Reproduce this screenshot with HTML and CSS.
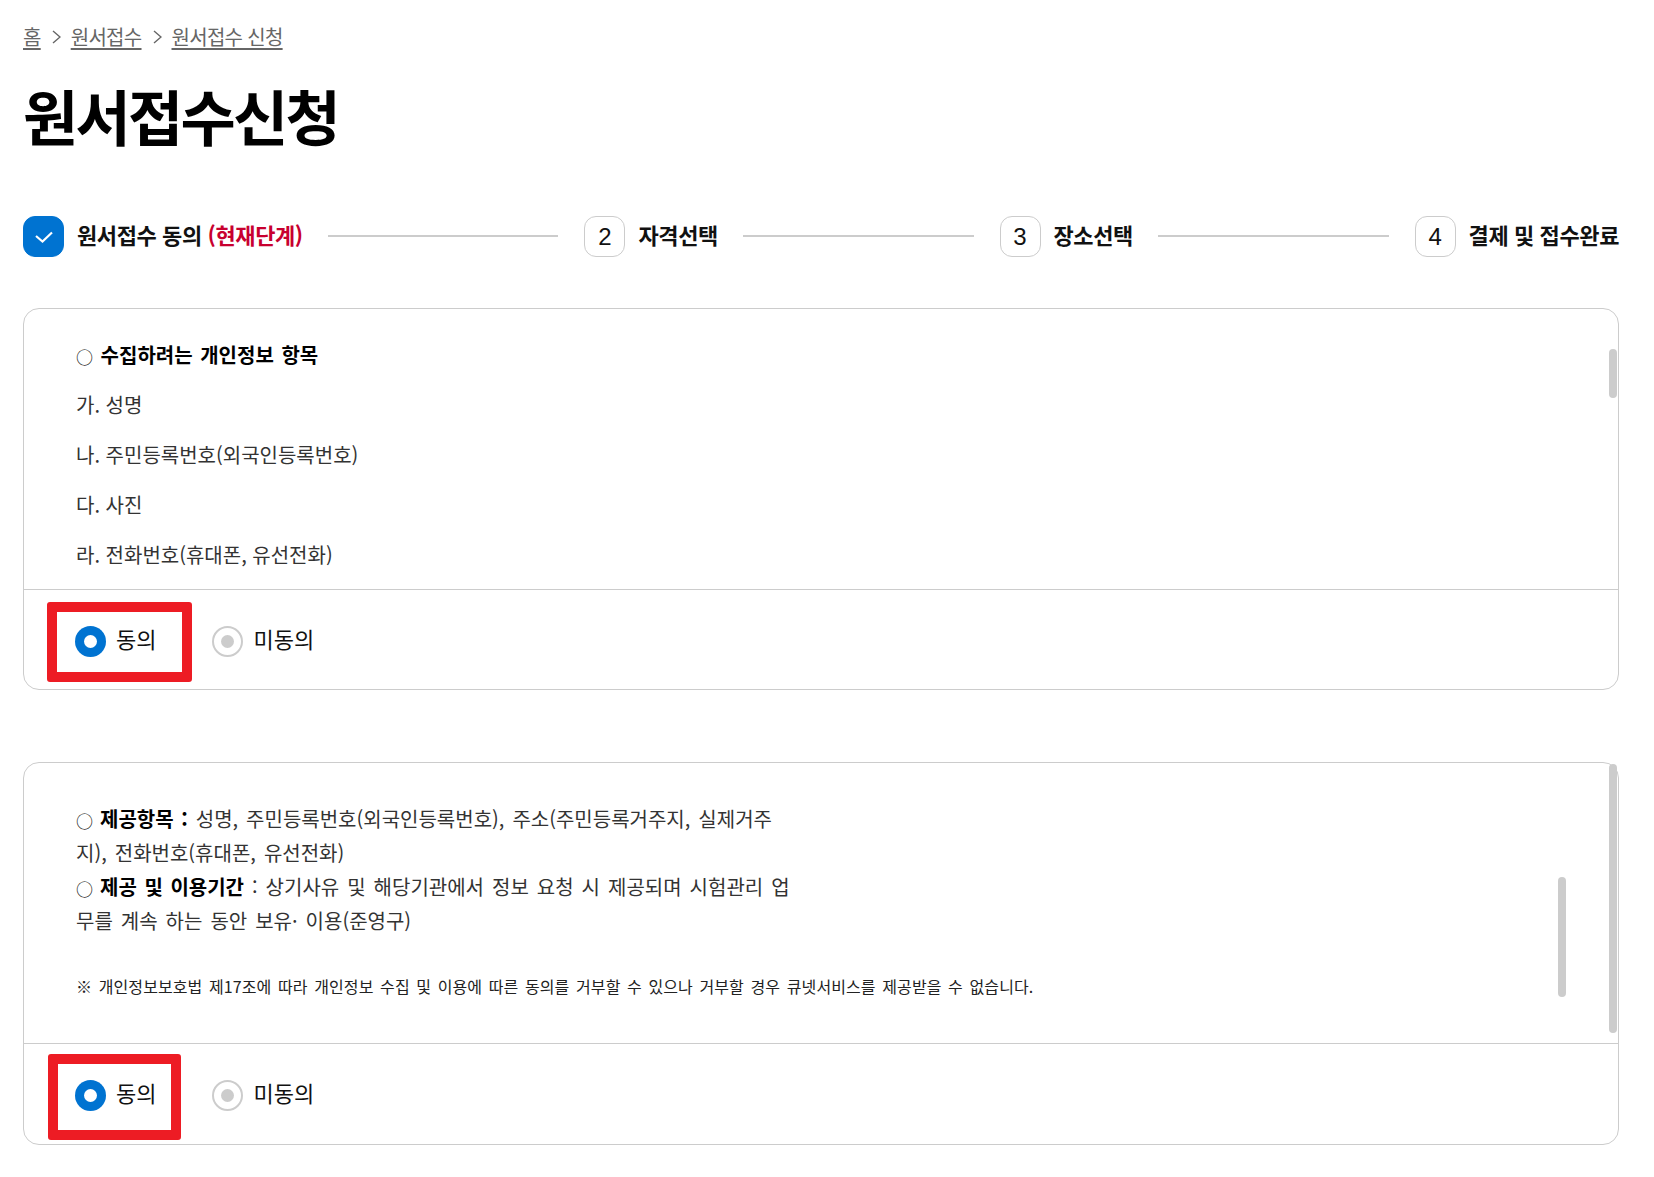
FILE: index.html
```html
<!DOCTYPE html>
<html lang="ko">
<head>
<meta charset="utf-8">
<title>원서접수신청</title>
<link rel="stylesheet" href="styles.css">
</head>
<body>
<nav class="crumbs">
  <a href="#">홈</a>
  <svg class="chev" viewBox="0 0 10 16"><path d="M2 2l7 6-7 6"/></svg>
  <a href="#">원서접수</a>
  <svg class="chev" viewBox="0 0 10 16"><path d="M2 2l7 6-7 6"/></svg>
  <a href="#">원서접수 신청</a>
</nav>
<h1 class="title">원서접수신청</h1>
<ol class="steps">
  <li class="step"><span class="num done"><svg viewBox="0 0 20 20"><path d="M2 9l6.5 5.5L18 5.5"/></svg></span><span class="step-name">원서접수 동의 <em>(현재단계)</em></span></li>
  <li class="line"></li>
  <li class="step"><span class="num">2</span><span class="step-name">자격선택</span></li>
  <li class="line"></li>
  <li class="step"><span class="num">3</span><span class="step-name">장소선택</span></li>
  <li class="line"></li>
  <li class="step"><span class="num">4</span><span class="step-name">결제 및 접수완료</span></li>
</ol>

<section class="card card-one">
  <div class="terms">
    <p><span class="ring">○</span> <strong>수집하려는 개인정보 항목</strong></p>
    <p>가. 성명</p>
    <p>나. 주민등록번호(외국인등록번호)</p>
    <p>다. 사진</p>
    <p>라. 전화번호(휴대폰, 유선전화)</p>
    <span class="thumb thumb-one"></span>
  </div>
  <div class="choices">
    <label class="choice"><span class="radio on"></span>동의</label>
    <label class="choice"><span class="radio"></span>미동의</label>
    <span class="mark mark-one"></span>
  </div>
</section>

<section class="card card-two">
  <div class="terms">
    <p class="dense"><span class="ring">○</span> <strong>제공항목 :</strong> 성명, 주민등록번호(외국인등록번호), 주소(주민등록거주지, 실제거주<br>지), 전화번호(휴대폰, 유선전화)<br><span class="ring">○</span> <strong>제공 및 이용기간</strong> : 상기사유 및 해당기관에서 정보 요청 시 제공되며 시험관리 업<br>무를 계속 하는 동안 보유· 이용(준영구)</p>
    <p class="note">※ 개인정보보호법 제17조에 따라 개인정보 수집 및 이용에 따른 동의를 거부할 수 있으나 거부할 경우 큐넷서비스를 제공받을 수 없습니다.</p>
    <span class="thumb thumb-inner"></span>
    <span class="thumb thumb-outer"></span>
  </div>
  <div class="choices">
    <label class="choice"><span class="radio on"></span>동의</label>
    <label class="choice"><span class="radio"></span>미동의</label>
    <span class="mark mark-two"></span>
  </div>
</section>
</body>
</html>
```
FILE: styles.css
```css
* { box-sizing: border-box; }
html, body { margin: 0; background: #fff; }
body {
  padding: 0 35px 0 23px;
  height: 1177px;
  overflow: hidden;
  font-family: "Noto Sans CJK KR", "Noto Sans", sans-serif;
  color: #222;
}
.crumbs {
  height: 30px;
  margin-top: 21px;
  display: flex;
  align-items: center;
  gap: 10px;
  font-size: 20px;
  letter-spacing: -0.7px;
  color: #666;
}
.crumbs a { color: #666; text-decoration: underline; text-underline-offset: 3px; }
.chev { width: 10px; height: 16px; margin-top: 2px; }
.chev path { fill: none; stroke: #666; stroke-width: 1.4; }
.title {
  margin: 29px 0 0;
  height: 70px;
  font-size: 60px;
  line-height: 70px;
  font-weight: 700;
  letter-spacing: -2.7px;
  color: #000;
}
.steps {
  list-style: none;
  margin: 66px 0 0;
  padding: 0;
  display: flex;
  align-items: center;
  height: 41px;
}
.step { display: flex; align-items: center; gap: 13px; }
.num {
  width: 41px;
  height: 41px;
  border: 1px solid #ccc;
  border-radius: 12px;
  display: flex;
  align-items: center;
  justify-content: center;
  font-size: 24px;
  font-family: "Liberation Sans", sans-serif;
  color: #111;
}
.num.done { background: #0073d1; border-color: #0073d1; }
.num.done svg { width: 20px; height: 20px; }
.num.done path { fill: none; stroke: #fff; stroke-width: 2.2; }
.step-name {
  margin-top: -6px;
  font-size: 22px;
  font-weight: 700;
  letter-spacing: -0.4px;
  color: #111;
  white-space: nowrap;
}
.step-name em { font-style: normal; color: #c8002f; }
.line { flex: 1; height: 2px; background: #ccc; margin: -1px 26px 0 25px; }
.card {
  position: relative;
  border: 1px solid #ccc;
  border-radius: 16px;
}
.card-one { margin-top: 51px; height: 382px; }
.card-two { margin-top: 72px; height: 383px; }
.terms { position: relative; padding: 0 0 0 52px; }
.card-one .terms { height: 280px; padding-top: 21px; }
.card-two .terms { height: 280px; padding-top: 39px; }
.terms p { margin: 0; font-size: 20px; line-height: 50px; color: #333; }
.terms strong { color: #000; font-weight: 700; word-spacing: 2px; }
.ring { display: inline-block; width: 19px; font-size: 17px; vertical-align: -1px; line-height: 1; color: #111; }
.terms .dense .ring { width: 16px; }
.terms .dense { line-height: 34px; white-space: nowrap; word-spacing: 2.4px; }
.terms .note { margin-top: 31px; font-size: 16px; line-height: 34px; color: #222; white-space: nowrap; word-spacing: 2px; letter-spacing: 0.1px; }
.choices {
  position: relative;
  height: 100px;
  border-top: 1px solid #ccc;
  display: flex;
  align-items: center;
  gap: 56px;
  padding: 0 0 0 51px;
}
.choice { display: flex; align-items: center; gap: 10px; margin-bottom: 4px; font-size: 22px; color: #111; }
.radio {
  width: 31px;
  height: 31px;
  margin-top: 8px;
  border: 2px solid #ccc;
  border-radius: 50%;
  display: flex;
  align-items: center;
  justify-content: center;
}
.radio::after { content: ""; width: 13px; height: 13px; border-radius: 50%; background: #ccc; }
.radio.on { border: 0; background: #0073d1; }
.radio.on::after { background: #fff; }
.thumb { position: absolute; width: 8px; background: #ccc; border-radius: 4px; }
.thumb-one { right: 1px; top: 40px; height: 49px; }
.thumb-inner { right: 52px; top: 114px; height: 120px; }
.thumb-outer { right: 1px; top: 1px; height: 269px; }
.mark {
  position: absolute;
  border: 10px solid #ed1c24;
  border-radius: 3px;
  background: transparent;
}
.mark-one { left: 23px; top: 12px; width: 145px; height: 80px; }
.mark-two { left: 24px; top: 10px; width: 133px; height: 86px; }
```
